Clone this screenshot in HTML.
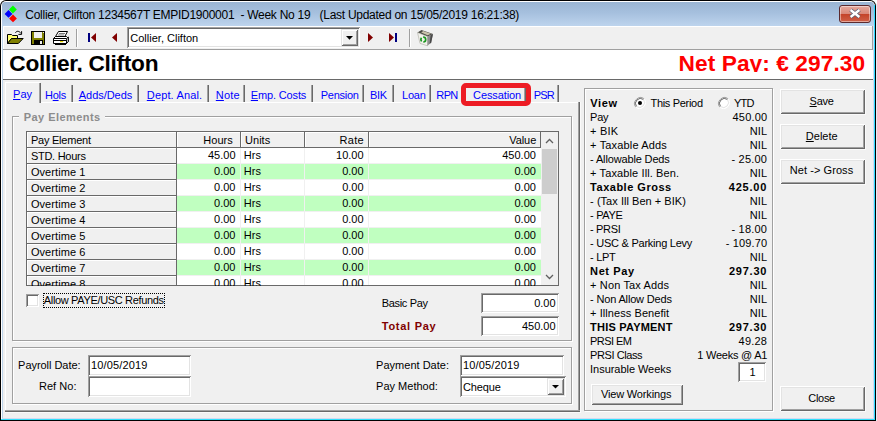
<!DOCTYPE html>
<html lang="en">
<head>
<meta charset="utf-8">
<title>Collier, Clifton - Week No 19</title>
<style>
html,body{margin:0;padding:0;}
body{width:877px;height:421px;overflow:hidden;background:#fff;position:relative;font-family:"Liberation Sans",sans-serif;font-size:11px;color:#000;}
.a{position:absolute;box-sizing:border-box;}
.t{position:absolute;white-space:pre;font-family:"Liberation Sans",sans-serif;}
.t u{text-decoration:underline;text-underline-offset:1px;}
#win{left:0;top:0;width:876px;height:421px;background:#000;border-radius:6px 6px 0 0;overflow:hidden;}
#winw{left:1px;top:1px;width:874px;height:419px;background:#fff;border-radius:5px 5px 0 0;overflow:hidden;}
#title{left:2px;top:2px;width:872px;height:24px;background:linear-gradient(#9ab5d3,#a6c0de 45%,#bdd4ed);border-radius:3px 3px 0 0;}
#lb{left:1px;top:25px;width:1px;height:394px;background:#bcd3ea;}
#rb1{left:872px;top:25px;width:1px;height:394px;background:#d3daf0;}
#rb2{left:873px;top:25px;width:1px;height:394px;background:#2fdcff;}
#bb0{left:1px;top:416px;width:873px;height:1px;background:#d3daf0;}
#bb1{left:0px;top:417px;width:874px;height:2px;background:linear-gradient(#7fe6ff,#19d7ff);}
#client{left:3px;top:26px;width:870px;height:392px;background:#f0f0f0;}
.sunk{background:#fff;box-shadow:inset 1px 1px #a0a0a0,inset -1px -1px #fff,inset 2px 2px #696969,inset -2px -2px #e3e3e3;}
.btn{background:#f0f0f0;box-shadow:inset 1px 1px #fff,inset -1px -1px #696969,inset 2px 2px #e3e3e3,inset -2px -2px #a0a0a0;}
.cbtn{background:#f0f0f0;box-shadow:inset 1px 1px #e3e3e3,inset -1px -1px #696969,inset 2px 2px #fff,inset -2px -2px #a0a0a0;}
.bo{box-shadow:inset 1px 1px #fff,inset -1px -1px #696969,inset 2px 2px #e3e3e3,inset -2px -2px #a0a0a0,1px 1px 0 #fafafa;}
.etch{border:1px solid #a0a0a0;box-shadow:1px 1px 0 #fff,inset 1px 1px 0 #fff;}
.vsep{width:2px;border-left:1px solid #a0a0a0;border-right:1px solid #fff;}
.tabsep{width:2px;border-left:1px solid #a0a0a0;border-right:1px solid #696969;}
.hd{background:#f0f0f0;border-right:1px solid #696969;border-bottom:1px solid #696969;box-shadow:inset 1px 1px 0 #fff;}
.rw{left:177px;width:364px;height:15px;}
.g{background:#c0ffc0;}
.vl{width:1px;background:#f0f0f0;top:148px;height:137px;}
</style>
</head>
<body>
<div class="a" id="win"></div>
<div class="a" id="winw"></div>
<div class="a" id="title"></div>
<div class="a" id="lb" style="left:2px"></div>
<div class="a" id="client"></div>
<div class="a" id="rb1" style="left:873px"></div>
<div class="a" id="rb2" style="left:874px;top:5px;height:414px"></div>
<div class="a" id="bb0" style="top:418px;left:2px;width:872px"></div>
<div class="a" id="bb1" style="top:419px;left:1px;width:874px;height:1px;background:#30defa"></div>
<div class="a" style="left:876px;top:4px;width:1px;height:417px;background:#e3edf8"></div>
<!-- app icon -->
<svg class="a" style="left:0px;top:0px" width="24" height="26" viewBox="0 0 24 26">
<polygon points="12.9,5.6 16.8,9.5 12.9,13.4 9.0,9.5" fill="#00ff00"/>
<polygon points="8.5,10.0 12.4,13.9 8.5,17.8 4.6,13.9" fill="#0000ff"/>
<polygon points="13.0,14.499999999999998 16.9,18.4 13.0,22.299999999999997 9.1,18.4" fill="#ff0000"/>
</svg>
<!-- close button -->
<div class="a" style="left:839px;top:5px;width:32px;height:18px;border-radius:3px;border:1px solid #5b2a2e;background:linear-gradient(#e6a99d 0%,#d9887a 48%,#c4432a 52%,#cf6048 100%);box-shadow:inset 0 0 0 1px rgba(255,255,255,.45);"></div>
<svg class="a" style="left:848px;top:8px" width="14" height="11" viewBox="0 0 14 11"><path d="M2.6 2 L11.4 9 M11.4 2 L2.6 9" stroke="#5a5f73" stroke-width="4" stroke-linecap="butt"/><path d="M2.6 2 L11.4 9 M11.4 2 L2.6 9" stroke="#fff" stroke-width="2.3" stroke-linecap="butt"/></svg>
<!-- toolbar -->
<div class="a" style="left:3px;top:26px;width:870px;height:1px;background:#fff"></div>
<div class="a" style="left:3px;top:49px;width:870px;height:1px;background:#a0a0a0"></div>
<div class="a" style="left:3px;top:50px;width:870px;height:29px;background:#fff"></div>
<div class="a" style="left:3px;top:79px;width:870px;height:1px;background:#696969"></div>
<div class="a" style="left:3px;top:72px;width:870px;height:7px;background:#fff;z-index:5"></div>
<div class="a" style="left:3px;top:27px;width:1px;height:22px;background:#fff"></div>
<div class="a" style="left:872px;top:26px;width:1px;height:24px;background:#a0a0a0"></div>
<!-- folder icon -->
<svg class="a" style="left:7px;top:30px" width="18" height="15" viewBox="0 0 18 15">
<path d="M0.5 13.5 V4.5 H4.5 L5.5 5.5 H10.5 V8.5 H4.5 Z" fill="#ffff70" stroke="#000" stroke-width="1"/>
<path d="M0.5 13.5 L4.5 8.5 H16.2 L11.3 13.5 Z" fill="#808000" stroke="#000" stroke-width="1"/>
<path d="M8.4 2.8 C9.6 0.7 12.2 0.7 13.9 3.4" fill="none" stroke="#000" stroke-width="1"/>
<path d="M14.6 1.2 V4.4 H11.4" fill="none" stroke="#000" stroke-width="1"/>
</svg>
<!-- floppy icon -->
<svg class="a" style="left:31px;top:31px" width="14" height="14" viewBox="0 0 14 14" shape-rendering="crispEdges">
<rect x="0" y="0" width="14" height="14" fill="#000"/>
<rect x="1" y="1" width="12" height="12" fill="#808000"/>
<rect x="3" y="1" width="8" height="6" fill="#f0f0f0"/>
<rect x="3" y="9" width="9" height="4" fill="#000"/>
<rect x="9" y="10" width="2" height="3" fill="#f0f0f0"/>
<rect x="12" y="1" width="1" height="1" fill="#f0f0f0"/>
</svg>
<!-- printer icon -->
<svg class="a" style="left:52px;top:30px" width="18" height="16" viewBox="0 0 18 16">
<path d="M3.5 6.5 L6.5 1.5 H15.5 L12.8 6.5 Z" fill="#fff" stroke="#000"/>
<path d="M7 3.5 H13 M6 5 H12" stroke="#444" stroke-width="0.7"/>
<path d="M1.5 8.5 L3.5 6.5 H14.5 L16.5 8.5 V11.5 L14.5 13.5 H1.5 Z" fill="#fff" stroke="#000"/>
<path d="M14.5 8.7 L16.5 7 V11.5 L14.5 13.5 Z" fill="#b8b8b8" stroke="#000" stroke-width="0.8"/>
<path d="M1.5 10.5 H14.5 V13.5 M1.5 8.5 H14.5" fill="none" stroke="#000"/>
<rect x="8" y="11" width="3.2" height="1.2" fill="#e0d000"/>
<path d="M3 14.5 H14" stroke="#000"/>
</svg>
<div class="a vsep" style="left:76px;top:29px;height:18px"></div>
<!-- nav first -->
<svg class="a" style="left:87px;top:32px" width="11" height="11" viewBox="0 0 11 11"><rect x="1" y="1" width="2" height="9" fill="#000080"/><polygon points="9,1 9,10 4,5.5" fill="#800000"/></svg>
<svg class="a" style="left:110px;top:32px" width="9" height="11" viewBox="0 0 9 11"><polygon points="7,1 7,10 2,5.5" fill="#800000"/></svg>
<!-- combo -->
<div class="a sunk" style="left:127px;top:27px;width:233px;height:21px"></div>
<div class="a cbtn" style="left:341px;top:29px;width:17px;height:17px"></div>
<svg class="a" style="left:345px;top:35px" width="9" height="6" viewBox="0 0 9 6"><polygon points="1,1 8,1 4.5,4.8" fill="#000"/></svg>
<svg class="a" style="left:366px;top:32px" width="9" height="11" viewBox="0 0 9 11"><polygon points="2,1 2,10 7,5.5" fill="#800000"/></svg>
<svg class="a" style="left:387px;top:32px" width="12" height="11" viewBox="0 0 12 11"><polygon points="2,1 2,10 7,5.5" fill="#800000"/><rect x="8" y="1" width="2" height="9" fill="#000080"/></svg>
<div class="a vsep" style="left:409px;top:29px;height:18px"></div>
<!-- recycle bin -->
<svg class="a" style="left:416px;top:29px" width="18" height="18" viewBox="0 0 18 18">
<polygon points="1.5,3.5 5.5,1 17,5 11.5,7.8" fill="#4c4c46"/>
<polygon points="5.2,3.4 7.2,1.9 15,4.7 11.6,6.3" fill="#c9c3ab"/>
<polygon points="1.5,3.5 11.5,7.5 11.5,16.8 4,14.4" fill="#f1f1eb" stroke="#a9a9a1" stroke-width="0.6"/>
<polygon points="11.5,7.5 17,5 15.2,13.4 11.5,16.8" fill="#8e8e8e"/>
<polygon points="14.6,6.1 17,5 15.2,13.4 13.6,14.9" fill="#4a4a4a"/>
<circle cx="7.3" cy="10.6" r="2.4" fill="none" stroke="#17961d" stroke-width="1.7" stroke-dasharray="3.4 1.63"/>
</svg>

<!-- tab control -->
<div class="a" style="left:5px;top:82px;width:35px;height:1px;background:#fff"></div>
<div class="a" style="left:5px;top:83px;width:1px;height:328px;background:#fff"></div>
<div class="a tabsep" style="left:39px;top:83px;height:20px"></div>
<div class="a" style="left:41px;top:102px;width:538px;height:1px;background:#fff"></div>
<div class="a tabsep" style="left:71px;top:85px;height:17px"></div>
<div class="a tabsep" style="left:137px;top:85px;height:17px"></div>
<div class="a tabsep" style="left:207px;top:85px;height:17px"></div>
<div class="a tabsep" style="left:243px;top:85px;height:17px"></div>
<div class="a tabsep" style="left:311px;top:85px;height:17px"></div>
<div class="a tabsep" style="left:362px;top:85px;height:17px"></div>
<div class="a tabsep" style="left:392px;top:85px;height:17px"></div>
<div class="a tabsep" style="left:429px;top:85px;height:17px"></div>
<div class="a tabsep" style="left:524px;top:85px;height:17px"></div>
<div class="a tabsep" style="left:557px;top:85px;height:17px"></div>
<div class="a tabsep" style="left:578px;top:102px;height:310px"></div>
<div class="a" style="left:5px;top:410px;width:575px;height:2px;border-top:1px solid #a0a0a0;border-bottom:1px solid #696969"></div>
<div class="a" style="left:580px;top:102px;width:1px;height:311px;background:#fafafa"></div>
<div class="a" style="left:5px;top:412px;width:576px;height:1px;background:#fafafa"></div>
<!-- red highlight -->
<div class="a" style="left:461px;top:83px;width:70px;height:23px;border:5px solid #ed1c24;border-radius:5px"></div>

<!-- group box Pay Elements -->
<div class="a etch" style="left:12px;top:116px;width:560px;height:225px"></div>
<div class="a" style="left:19px;top:114px;width:86px;height:6px;background:#f0f0f0"></div>
<!-- table -->
<div class="a" style="left:26px;top:131px;width:533px;height:155px;background:#fff;border:1px solid #696969"></div>
<div class="a hd" style="left:27px;top:132px;width:150px;height:16px"></div>
<div class="a hd" style="left:177px;top:132px;width:64px;height:16px"></div>
<div class="a hd" style="left:241px;top:132px;width:64px;height:16px"></div>
<div class="a hd" style="left:305px;top:132px;width:64px;height:16px"></div>
<div class="a hd" style="left:369px;top:132px;width:172px;height:16px"></div>
<div class="a hd" style="left:27px;top:148px;width:150px;height:16px"></div>
<div class="a hd" style="left:27px;top:164px;width:150px;height:16px"></div>
<div class="a hd" style="left:27px;top:180px;width:150px;height:16px"></div>
<div class="a hd" style="left:27px;top:196px;width:150px;height:16px"></div>
<div class="a hd" style="left:27px;top:212px;width:150px;height:16px"></div>
<div class="a hd" style="left:27px;top:228px;width:150px;height:16px"></div>
<div class="a hd" style="left:27px;top:244px;width:150px;height:16px"></div>
<div class="a hd" style="left:27px;top:260px;width:150px;height:16px"></div>
<div class="a hd" style="left:27px;top:276px;width:150px;height:9px;border-bottom:none"></div>
<div class="a rw g" style="top:164px"></div>
<div class="a rw g" style="top:196px"></div>
<div class="a rw g" style="top:228px"></div>
<div class="a rw g" style="top:260px"></div>
<div class="a" style="left:177px;top:163px;width:364px;height:1px;background:#f0f0f0"></div>
<div class="a" style="left:177px;top:179px;width:364px;height:1px;background:#f0f0f0"></div>
<div class="a" style="left:177px;top:195px;width:364px;height:1px;background:#f0f0f0"></div>
<div class="a" style="left:177px;top:211px;width:364px;height:1px;background:#f0f0f0"></div>
<div class="a" style="left:177px;top:227px;width:364px;height:1px;background:#f0f0f0"></div>
<div class="a" style="left:177px;top:243px;width:364px;height:1px;background:#f0f0f0"></div>
<div class="a" style="left:177px;top:259px;width:364px;height:1px;background:#f0f0f0"></div>
<div class="a" style="left:177px;top:275px;width:364px;height:1px;background:#f0f0f0"></div>
<div class="a vl" style="left:240px"></div>
<div class="a vl" style="left:304px"></div>
<div class="a vl" style="left:368px"></div>
<!-- scrollbar -->
<div class="a" style="left:541px;top:132px;width:17px;height:153px;background:#f0f0f0"></div>
<div class="a" style="left:542px;top:149px;width:15px;height:45px;background:#cdcdcd"></div>
<svg class="a" style="left:545px;top:138px" width="9" height="6" viewBox="0 0 9 6"><path d="M1 5 L4.5 1.5 L8 5" fill="none" stroke="#606060" stroke-width="1.3"/></svg>
<svg class="a" style="left:545px;top:274px" width="9" height="6" viewBox="0 0 9 6"><path d="M1 1 L4.5 4.5 L8 1" fill="none" stroke="#606060" stroke-width="1.3"/></svg>
<!-- clip cover for overflow row text -->
<div class="a" id="cover" style="left:26px;top:286px;width:534px;height:6px;background:#f0f0f0;z-index:5"></div>
<!-- checkbox -->
<div class="a sunk" style="left:26px;top:294px;width:13px;height:13px"></div>
<div class="a" style="left:43px;top:293px;width:122px;height:15px;border:1px dotted #000"></div>
<!-- basic/total pay -->
<div class="a sunk" style="left:481px;top:293px;width:78px;height:20px"></div>
<div class="a sunk" style="left:481px;top:316px;width:78px;height:20px"></div>
<!-- lower frame -->
<div class="a etch" style="left:12px;top:347px;width:560px;height:57px"></div>
<div class="a sunk" style="left:88px;top:355px;width:103px;height:21px"></div>
<div class="a sunk" style="left:88px;top:376px;width:103px;height:21px"></div>
<div class="a sunk" style="left:460px;top:355px;width:104px;height:21px"></div>
<div class="a sunk" style="left:460px;top:376px;width:106px;height:21px"></div>
<div class="a cbtn" style="left:547px;top:378px;width:17px;height:17px"></div>
<svg class="a" style="left:551px;top:384px" width="9" height="6" viewBox="0 0 9 6"><polygon points="1,1 8,1 4.5,4.6" fill="#000"/></svg>

<!-- right panel -->
<div class="a etch" style="left:584px;top:88px;width:189px;height:323px"></div>
<!-- radios -->
<svg class="a" style="left:633px;top:96px" width="14" height="14" viewBox="0 0 14 14"><circle cx="7" cy="7" r="5.5" fill="#fff"/><path d="M2.8 11.2 A6 6 0 0 1 11.2 2.8" fill="none" stroke="#a0a0a0" stroke-width="1"/><path d="M3.5 10.5 A5 5 0 0 1 10.5 3.5" fill="none" stroke="#696969" stroke-width="1"/><path d="M11.2 2.8 A6 6 0 0 1 2.8 11.2" fill="none" stroke="#fff" stroke-width="1"/><path d="M10.5 3.5 A5 5 0 0 1 3.5 10.5" fill="none" stroke="#e3e3e3" stroke-width="1"/><circle cx="7" cy="7" r="2" fill="#000"/></svg>
<svg class="a" style="left:717px;top:96px" width="14" height="14" viewBox="0 0 14 14"><circle cx="7" cy="7" r="5.5" fill="#fff"/><path d="M2.8 11.2 A6 6 0 0 1 11.2 2.8" fill="none" stroke="#a0a0a0" stroke-width="1"/><path d="M3.5 10.5 A5 5 0 0 1 10.5 3.5" fill="none" stroke="#696969" stroke-width="1"/><path d="M11.2 2.8 A6 6 0 0 1 2.8 11.2" fill="none" stroke="#fff" stroke-width="1"/><path d="M10.5 3.5 A5 5 0 0 1 3.5 10.5" fill="none" stroke="#e3e3e3" stroke-width="1"/></svg>
<div class="a sunk" style="left:738px;top:362px;width:28px;height:20px"></div>
<div class="a btn" style="left:591px;top:384px;width:92px;height:21px"></div>
<!-- buttons -->
<div class="a btn bo" style="left:780px;top:89px;width:85px;height:25px"></div>
<div class="a btn bo" style="left:780px;top:124px;width:85px;height:25px"></div>
<div class="a btn bo" style="left:780px;top:159px;width:85px;height:25px"></div>
<div class="a btn bo" style="left:780px;top:386px;width:85px;height:25px"></div>

<span class="t" id="t0" style="top:8.34px;font-size:12px;line-height:15px;color:#000;letter-spacing:-0.270px;left:25.30px;">Collier, Clifton 1234567T EMPID1900001  - Week No 19   (Last Updated on 15/05/2019 16:21:38)</span>
<span class="t" id="t1" style="top:31.19px;font-size:11px;line-height:14px;color:#000;letter-spacing:0.003px;left:130.30px;">Collier, Clifton</span>
<span class="t" id="t2" style="top:49.13px;font-size:22.7px;line-height:28px;color:#000;font-weight:bold;letter-spacing:-0.305px;left:9.30px;">Collier, Clifton</span>
<span class="t" id="t3" style="top:49.13px;font-size:22.7px;line-height:28px;color:#ff0000;font-weight:bold;letter-spacing:0.070px;left:678.60px;">Net Pay: € 297.30</span>
<span class="t" id="t4" style="top:86.89px;font-size:11px;line-height:14px;color:#0000ff;letter-spacing:0.077px;left:13.00px;"><u>P</u>ay</span>
<span class="t" id="t5" style="top:87.79px;font-size:11px;line-height:14px;color:#0000ff;letter-spacing:-0.258px;left:45.00px;">H<u>o</u>ls</span>
<span class="t" id="t6" style="top:87.79px;font-size:11px;line-height:14px;color:#0000ff;letter-spacing:-0.048px;left:78.80px;"><u>A</u>dds/Deds</span>
<span class="t" id="t7" style="top:87.79px;font-size:11px;line-height:14px;color:#0000ff;letter-spacing:0.143px;left:146.80px;"><u>D</u>ept. Anal.</span>
<span class="t" id="t8" style="top:87.79px;font-size:11px;line-height:14px;color:#0000ff;letter-spacing:0.162px;left:215.80px;"><u>N</u>ote</span>
<span class="t" id="t9" style="top:87.79px;font-size:11px;line-height:14px;color:#0000ff;letter-spacing:-0.146px;left:250.80px;"><u>E</u>mp. Costs</span>
<span class="t" id="t10" style="top:87.79px;font-size:11px;line-height:14px;color:#0000ff;letter-spacing:-0.267px;left:320.80px;">Pension</span>
<span class="t" id="t11" style="top:87.79px;font-size:11px;line-height:14px;color:#0000ff;letter-spacing:-0.378px;left:370.10px;">BIK</span>
<span class="t" id="t12" style="top:87.79px;font-size:11px;line-height:14px;color:#0000ff;letter-spacing:-0.196px;left:402.00px;">Loan</span>
<span class="t" id="t13" style="top:87.79px;font-size:11px;line-height:14px;color:#0000ff;letter-spacing:-0.611px;left:436.30px;">RPN</span>
<span class="t" id="t14" style="top:87.79px;font-size:11px;line-height:14px;color:#0000ff;letter-spacing:-0.114px;left:473.10px;">Cessation</span>
<span class="t" id="t15" style="top:87.79px;font-size:11px;line-height:14px;color:#0000ff;letter-spacing:-0.800px;left:533.70px;">PSR</span>
<span class="t" id="t16" style="top:109.69px;font-size:11px;line-height:14px;color:#8c8c8c;font-weight:bold;letter-spacing:0.454px;left:23.70px;">Pay Elements</span>
<span class="t" id="t17" style="top:132.69px;font-size:11px;line-height:14px;color:#000;letter-spacing:-0.225px;left:30.90px;">Pay Element</span>
<span class="t" id="t18" style="top:132.69px;font-size:11px;line-height:14px;color:#000;letter-spacing:0.011px;left:203.30px;">Hours</span>
<span class="t" id="t19" style="top:132.69px;font-size:11px;line-height:14px;color:#000;letter-spacing:0.007px;left:245.10px;">Units</span>
<span class="t" id="t20" style="top:132.69px;font-size:11px;line-height:14px;color:#000;letter-spacing:0.287px;left:339.50px;">Rate</span>
<span class="t" id="t21" style="top:132.69px;font-size:11px;line-height:14px;color:#000;letter-spacing:-0.086px;left:509.30px;">Value</span>
<span class="t" id="t22" style="top:148.69px;font-size:11px;line-height:14px;color:#000;letter-spacing:-0.267px;left:30.90px;">STD. Hours</span>
<span class="t" id="t23" style="top:147.69px;font-size:11px;line-height:14px;color:#000;left:235.50px;transform:translateX(-100%);">45.00</span>
<span class="t" id="t24" style="top:147.69px;font-size:11px;line-height:14px;color:#000;letter-spacing:0.030px;left:243.80px;">Hrs</span>
<span class="t" id="t25" style="top:147.69px;font-size:11px;line-height:14px;color:#000;left:363.60px;transform:translateX(-100%);">10.00</span>
<span class="t" id="t26" style="top:147.69px;font-size:11px;line-height:14px;color:#000;left:535.90px;transform:translateX(-100%);">450.00</span>
<span class="t" id="t27" style="top:164.69px;font-size:11px;line-height:14px;color:#000;letter-spacing:0.070px;left:30.90px;">Overtime 1</span>
<span class="t" id="t28" style="top:163.69px;font-size:11px;line-height:14px;color:#000;left:235.50px;transform:translateX(-100%);">0.00</span>
<span class="t" id="t29" style="top:163.69px;font-size:11px;line-height:14px;color:#000;letter-spacing:0.030px;left:243.80px;">Hrs</span>
<span class="t" id="t30" style="top:163.69px;font-size:11px;line-height:14px;color:#000;left:363.60px;transform:translateX(-100%);">0.00</span>
<span class="t" id="t31" style="top:163.69px;font-size:11px;line-height:14px;color:#000;left:535.90px;transform:translateX(-100%);">0.00</span>
<span class="t" id="t32" style="top:180.69px;font-size:11px;line-height:14px;color:#000;letter-spacing:0.070px;left:30.90px;">Overtime 2</span>
<span class="t" id="t33" style="top:179.69px;font-size:11px;line-height:14px;color:#000;left:235.50px;transform:translateX(-100%);">0.00</span>
<span class="t" id="t34" style="top:179.69px;font-size:11px;line-height:14px;color:#000;letter-spacing:0.030px;left:243.80px;">Hrs</span>
<span class="t" id="t35" style="top:179.69px;font-size:11px;line-height:14px;color:#000;left:363.60px;transform:translateX(-100%);">0.00</span>
<span class="t" id="t36" style="top:179.69px;font-size:11px;line-height:14px;color:#000;left:535.90px;transform:translateX(-100%);">0.00</span>
<span class="t" id="t37" style="top:196.69px;font-size:11px;line-height:14px;color:#000;letter-spacing:0.070px;left:30.90px;">Overtime 3</span>
<span class="t" id="t38" style="top:195.69px;font-size:11px;line-height:14px;color:#000;left:235.50px;transform:translateX(-100%);">0.00</span>
<span class="t" id="t39" style="top:195.69px;font-size:11px;line-height:14px;color:#000;letter-spacing:0.030px;left:243.80px;">Hrs</span>
<span class="t" id="t40" style="top:195.69px;font-size:11px;line-height:14px;color:#000;left:363.60px;transform:translateX(-100%);">0.00</span>
<span class="t" id="t41" style="top:195.69px;font-size:11px;line-height:14px;color:#000;left:535.90px;transform:translateX(-100%);">0.00</span>
<span class="t" id="t42" style="top:212.69px;font-size:11px;line-height:14px;color:#000;letter-spacing:0.070px;left:30.90px;">Overtime 4</span>
<span class="t" id="t43" style="top:211.69px;font-size:11px;line-height:14px;color:#000;left:235.50px;transform:translateX(-100%);">0.00</span>
<span class="t" id="t44" style="top:211.69px;font-size:11px;line-height:14px;color:#000;letter-spacing:0.030px;left:243.80px;">Hrs</span>
<span class="t" id="t45" style="top:211.69px;font-size:11px;line-height:14px;color:#000;left:363.60px;transform:translateX(-100%);">0.00</span>
<span class="t" id="t46" style="top:211.69px;font-size:11px;line-height:14px;color:#000;left:535.90px;transform:translateX(-100%);">0.00</span>
<span class="t" id="t47" style="top:228.69px;font-size:11px;line-height:14px;color:#000;letter-spacing:0.070px;left:30.90px;">Overtime 5</span>
<span class="t" id="t48" style="top:227.69px;font-size:11px;line-height:14px;color:#000;left:235.50px;transform:translateX(-100%);">0.00</span>
<span class="t" id="t49" style="top:227.69px;font-size:11px;line-height:14px;color:#000;letter-spacing:0.030px;left:243.80px;">Hrs</span>
<span class="t" id="t50" style="top:227.69px;font-size:11px;line-height:14px;color:#000;left:363.60px;transform:translateX(-100%);">0.00</span>
<span class="t" id="t51" style="top:227.69px;font-size:11px;line-height:14px;color:#000;left:535.90px;transform:translateX(-100%);">0.00</span>
<span class="t" id="t52" style="top:244.69px;font-size:11px;line-height:14px;color:#000;letter-spacing:0.070px;left:30.90px;">Overtime 6</span>
<span class="t" id="t53" style="top:243.69px;font-size:11px;line-height:14px;color:#000;left:235.50px;transform:translateX(-100%);">0.00</span>
<span class="t" id="t54" style="top:243.69px;font-size:11px;line-height:14px;color:#000;letter-spacing:0.030px;left:243.80px;">Hrs</span>
<span class="t" id="t55" style="top:243.69px;font-size:11px;line-height:14px;color:#000;left:363.60px;transform:translateX(-100%);">0.00</span>
<span class="t" id="t56" style="top:243.69px;font-size:11px;line-height:14px;color:#000;left:535.90px;transform:translateX(-100%);">0.00</span>
<span class="t" id="t57" style="top:260.69px;font-size:11px;line-height:14px;color:#000;letter-spacing:0.070px;left:30.90px;">Overtime 7</span>
<span class="t" id="t58" style="top:259.69px;font-size:11px;line-height:14px;color:#000;left:235.50px;transform:translateX(-100%);">0.00</span>
<span class="t" id="t59" style="top:259.69px;font-size:11px;line-height:14px;color:#000;letter-spacing:0.030px;left:243.80px;">Hrs</span>
<span class="t" id="t60" style="top:259.69px;font-size:11px;line-height:14px;color:#000;left:363.60px;transform:translateX(-100%);">0.00</span>
<span class="t" id="t61" style="top:259.69px;font-size:11px;line-height:14px;color:#000;left:535.90px;transform:translateX(-100%);">0.00</span>
<span class="t" id="t62" style="top:276.69px;font-size:11px;line-height:14px;color:#000;letter-spacing:0.070px;left:30.90px;">Overtime 8</span>
<span class="t" id="t63" style="top:275.69px;font-size:11px;line-height:14px;color:#000;left:235.50px;transform:translateX(-100%);">0.00</span>
<span class="t" id="t64" style="top:275.69px;font-size:11px;line-height:14px;color:#000;letter-spacing:0.030px;left:243.80px;">Hrs</span>
<span class="t" id="t65" style="top:275.69px;font-size:11px;line-height:14px;color:#000;left:363.60px;transform:translateX(-100%);">0.00</span>
<span class="t" id="t66" style="top:275.69px;font-size:11px;line-height:14px;color:#000;left:535.90px;transform:translateX(-100%);">0.00</span>
<span class="t" id="t67" style="top:292.89px;font-size:11px;line-height:14px;color:#000;letter-spacing:-0.340px;left:43.80px;">Allow PAYE/USC Refunds</span>
<span class="t" id="t68" style="top:295.59px;font-size:11px;line-height:14px;color:#000;letter-spacing:-0.336px;left:381.80px;">Basic Pay</span>
<span class="t" id="t69" style="top:318.69px;font-size:11px;line-height:14px;color:#800000;font-weight:bold;letter-spacing:0.723px;left:381.80px;">Total Pay</span>
<span class="t" id="t70" style="top:295.59px;font-size:11px;line-height:14px;color:#000;left:555.60px;transform:translateX(-100%);">0.00</span>
<span class="t" id="t71" style="top:318.69px;font-size:11px;line-height:14px;color:#000;left:555.60px;transform:translateX(-100%);">450.00</span>
<span class="t" id="t72" style="top:358.09px;font-size:11px;line-height:14px;color:#000;letter-spacing:-0.045px;left:18.10px;">Payroll Date:</span>
<span class="t" id="t73" style="top:378.89px;font-size:11px;line-height:14px;color:#000;letter-spacing:0.043px;left:38.90px;">Ref No:</span>
<span class="t" id="t74" style="top:358.09px;font-size:11px;line-height:14px;color:#000;letter-spacing:0.154px;left:90.90px;">10/05/2019</span>
<span class="t" id="t75" style="top:358.09px;font-size:11px;line-height:14px;color:#000;letter-spacing:0.010px;left:376.10px;">Payment Date:</span>
<span class="t" id="t76" style="top:378.89px;font-size:11px;line-height:14px;color:#000;letter-spacing:0.003px;left:376.10px;">Pay Method:</span>
<span class="t" id="t77" style="top:358.09px;font-size:11px;line-height:14px;color:#000;letter-spacing:0.154px;left:462.90px;">10/05/2019</span>
<span class="t" id="t78" style="top:379.89px;font-size:11px;line-height:14px;color:#000;letter-spacing:-0.124px;left:462.90px;">Cheque</span>
<span class="t" id="t79" style="top:95.79px;font-size:11px;line-height:14px;color:#000;font-weight:bold;letter-spacing:0.631px;left:590.30px;">View</span>
<span class="t" id="t80" style="top:95.79px;font-size:11px;line-height:14px;color:#000;letter-spacing:-0.313px;left:650.50px;">This Period</span>
<span class="t" id="t81" style="top:95.79px;font-size:11px;line-height:14px;color:#000;letter-spacing:-0.767px;left:734.00px;">YTD</span>
<span class="t" id="t82" style="top:109.89px;font-size:11px;line-height:14px;color:#000;letter-spacing:-0.290px;left:590.10px;">Pay</span>
<span class="t" id="t83" style="top:109.89px;font-size:11px;line-height:14px;color:#000;letter-spacing:0.157px;left:732.60px;">450.00</span>
<span class="t" id="t84" style="top:123.89px;font-size:11px;line-height:14px;color:#000;letter-spacing:0.216px;left:590.10px;">+ BIK</span>
<span class="t" id="t85" style="top:123.89px;font-size:11px;line-height:14px;color:#000;letter-spacing:0.092px;left:749.80px;">NIL</span>
<span class="t" id="t86" style="top:137.89px;font-size:11px;line-height:14px;color:#000;letter-spacing:0.156px;left:590.10px;">+ Taxable Adds</span>
<span class="t" id="t87" style="top:137.89px;font-size:11px;line-height:14px;color:#000;letter-spacing:0.092px;left:749.80px;">NIL</span>
<span class="t" id="t88" style="top:151.89px;font-size:11px;line-height:14px;color:#000;letter-spacing:-0.146px;left:590.10px;">- Allowable Deds</span>
<span class="t" id="t89" style="top:151.89px;font-size:11px;line-height:14px;color:#000;letter-spacing:0.221px;left:731.40px;">- 25.00</span>
<span class="t" id="t90" style="top:165.89px;font-size:11px;line-height:14px;color:#000;letter-spacing:0.114px;left:590.10px;">+ Taxable Ill. Ben.</span>
<span class="t" id="t91" style="top:165.89px;font-size:11px;line-height:14px;color:#000;letter-spacing:0.092px;left:749.80px;">NIL</span>
<span class="t" id="t92" style="top:179.89px;font-size:11px;line-height:14px;color:#000;font-weight:bold;letter-spacing:0.508px;left:590.10px;">Taxable Gross</span>
<span class="t" id="t93" style="top:179.89px;font-size:11px;line-height:14px;color:#000;font-weight:bold;letter-spacing:0.791px;left:728.80px;">425.00</span>
<span class="t" id="t94" style="top:193.89px;font-size:11px;line-height:14px;color:#000;letter-spacing:0.035px;left:590.10px;">- (Tax Ill Ben + BIK)</span>
<span class="t" id="t95" style="top:193.89px;font-size:11px;line-height:14px;color:#000;letter-spacing:0.092px;left:749.80px;">NIL</span>
<span class="t" id="t96" style="top:207.89px;font-size:11px;line-height:14px;color:#000;letter-spacing:-0.323px;left:590.10px;">- PAYE</span>
<span class="t" id="t97" style="top:207.89px;font-size:11px;line-height:14px;color:#000;letter-spacing:0.092px;left:749.80px;">NIL</span>
<span class="t" id="t98" style="top:221.89px;font-size:11px;line-height:14px;color:#000;letter-spacing:-0.351px;left:590.10px;">- PRSI</span>
<span class="t" id="t99" style="top:221.89px;font-size:11px;line-height:14px;color:#000;letter-spacing:0.221px;left:731.40px;">- 18.00</span>
<span class="t" id="t100" style="top:235.89px;font-size:11px;line-height:14px;color:#000;letter-spacing:-0.249px;left:590.10px;">- USC &amp; Parking Levy</span>
<span class="t" id="t101" style="top:235.89px;font-size:11px;line-height:14px;color:#000;letter-spacing:0.141px;left:725.70px;">- 109.70</span>
<span class="t" id="t102" style="top:249.89px;font-size:11px;line-height:14px;color:#000;letter-spacing:-0.341px;left:590.10px;">- LPT</span>
<span class="t" id="t103" style="top:249.89px;font-size:11px;line-height:14px;color:#000;letter-spacing:0.092px;left:749.80px;">NIL</span>
<span class="t" id="t104" style="top:263.89px;font-size:11px;line-height:14px;color:#000;font-weight:bold;letter-spacing:0.606px;left:590.10px;">Net Pay</span>
<span class="t" id="t105" style="top:263.89px;font-size:11px;line-height:14px;color:#000;font-weight:bold;letter-spacing:0.757px;left:729.00px;">297.30</span>
<span class="t" id="t106" style="top:277.89px;font-size:11px;line-height:14px;color:#000;letter-spacing:0.139px;left:590.10px;">+ Non Tax Adds</span>
<span class="t" id="t107" style="top:277.89px;font-size:11px;line-height:14px;color:#000;letter-spacing:0.092px;left:749.80px;">NIL</span>
<span class="t" id="t108" style="top:291.89px;font-size:11px;line-height:14px;color:#000;letter-spacing:-0.167px;left:590.10px;">- Non Allow Deds</span>
<span class="t" id="t109" style="top:291.89px;font-size:11px;line-height:14px;color:#000;letter-spacing:0.092px;left:749.80px;">NIL</span>
<span class="t" id="t110" style="top:305.89px;font-size:11px;line-height:14px;color:#000;letter-spacing:0.067px;left:590.10px;">+ Illness Benefit</span>
<span class="t" id="t111" style="top:305.89px;font-size:11px;line-height:14px;color:#000;letter-spacing:0.092px;left:749.80px;">NIL</span>
<span class="t" id="t112" style="top:319.89px;font-size:11px;line-height:14px;color:#000;font-weight:bold;letter-spacing:0.210px;left:590.10px;">THIS PAYMENT</span>
<span class="t" id="t113" style="top:319.89px;font-size:11px;line-height:14px;color:#000;font-weight:bold;letter-spacing:0.757px;left:729.00px;">297.30</span>
<span class="t" id="t114" style="top:333.89px;font-size:11px;line-height:14px;color:#000;letter-spacing:-0.576px;left:590.10px;">PRSI EM</span>
<span class="t" id="t115" style="top:333.89px;font-size:11px;line-height:14px;color:#000;letter-spacing:0.214px;left:738.60px;">49.28</span>
<span class="t" id="t116" style="top:347.89px;font-size:11px;line-height:14px;color:#000;letter-spacing:-0.425px;left:590.10px;">PRSI Class</span>
<span class="t" id="t117" style="top:347.89px;font-size:11px;line-height:14px;color:#000;letter-spacing:-0.236px;left:697.30px;">1 Weeks @ A1</span>
<span class="t" id="t118" style="top:361.89px;font-size:11px;line-height:14px;color:#000;letter-spacing:-0.042px;left:590.10px;">Insurable Weeks</span>
<span class="t" id="t119" style="top:364.69px;font-size:11px;line-height:14px;color:#000;letter-spacing:0.175px;left:749.60px;">1</span>
<span class="t" id="t120" style="top:386.89px;font-size:11px;line-height:14px;color:#000;letter-spacing:-0.150px;left:600.90px;">View Workings</span>
<span class="t" id="t121" style="top:93.79px;font-size:11px;line-height:14px;color:#000;letter-spacing:-0.248px;left:809.60px;"><u>S</u>ave</span>
<span class="t" id="t122" style="top:128.69px;font-size:11px;line-height:14px;color:#000;letter-spacing:0.015px;left:805.80px;"><u>D</u>elete</span>
<span class="t" id="t123" style="top:163.19px;font-size:11px;line-height:14px;color:#000;letter-spacing:0.062px;left:789.80px;">Net -&gt; Gross</span>
<span class="t" id="t124" style="top:390.69px;font-size:11px;line-height:14px;color:#000;letter-spacing:-0.305px;left:808.30px;">Close</span>
</body>
</html>
